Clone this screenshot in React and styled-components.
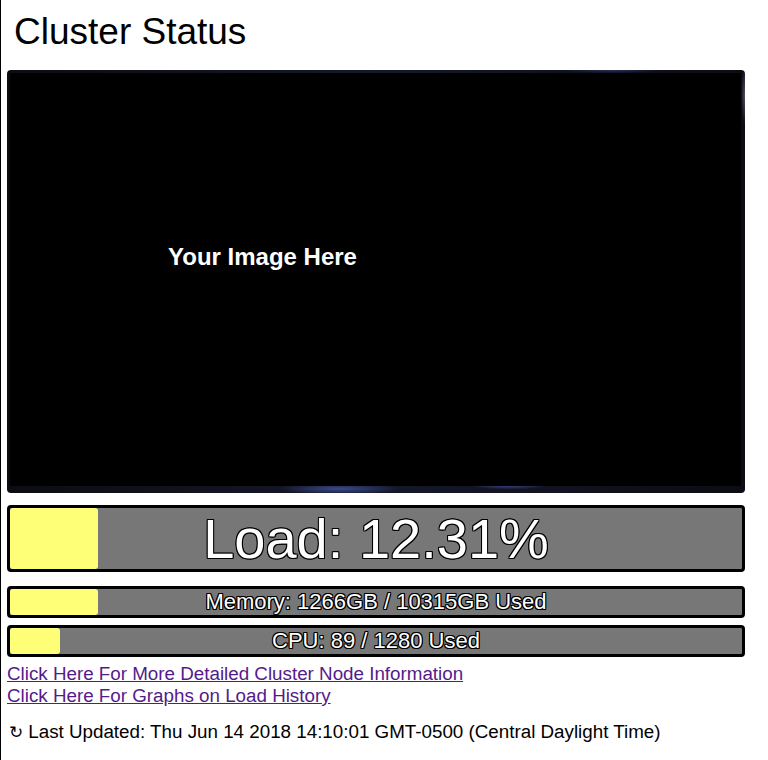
import React from 'react'
import styled, { createGlobalStyle } from 'styled-components'

const GlobalStyle = createGlobalStyle`
  html, body {
    margin: 0;
    padding: 0;
    background: #fff;
  }
  body {
    font-family: "Liberation Sans", Arial, sans-serif;
  }
`

const Page = styled.div`
  min-height: 100vh;
  box-sizing: border-box;
  border-left: 1px solid #000;
  padding: 8px 23px 0 6px;
`

const Title = styled.h1`
  margin: 2px 0 17px 7px;
  font-size: 37px;
  font-weight: normal;
  line-height: 43px;
  color: #000;
`

const ImageFrame = styled.div`
  height: 423px;
  box-sizing: border-box;
  border-radius: 4px;
  padding: 3px 4px 7px 3px;
  background:
    radial-gradient(ellipse 60px 6px at 45% 99%, #3a4a8a, transparent),
    radial-gradient(ellipse 40px 5px at 68% 98%, #4a4c9a, transparent),
    radial-gradient(ellipse 50px 3px at 82% 0%, #2a3060, transparent),
    radial-gradient(ellipse 4px 30px at 100% 6%, #50506a, transparent),
    linear-gradient(90deg, #0c0c12, #15182a 50%, #0c0c14);
`

const ImageInner = styled.div`
  height: 100%;
  background: #000;
  padding: 170px 0 0 158px;
  box-sizing: border-box;
`

const Caption = styled.span`
  color: #fff;
  font-weight: bold;
  font-size: 24px;
`

const Bar = styled.div`
  position: relative;
  margin-top: ${p => p.$gap}px;
  height: ${p => p.$height}px;
  border: 3px solid #000;
  border-radius: 4px;
  background: #777;
  display: flex;
  align-items: center;
  justify-content: center;
  overflow: hidden;
`

const Fill = styled.div`
  position: absolute;
  left: 0;
  top: 0;
  bottom: 0;
  background: #ffff77;
  border-radius: 3px;
`

const BarLabel = styled.span`
  position: relative;
  color: #fff;
  font-size: ${p => p.$size}px;
  line-height: 1;
  white-space: nowrap;
  text-shadow:
    -1px -1px 0 #000, 1px -1px 0 #000, -1px 1px 0 #000, 1px 1px 0 #000,
    0 -1px 0 #000, 0 1px 0 #000, -1px 0 0 #000, 1px 0 0 #000;
`

const Links = styled.div`
  margin-top: 6px;
  display: flex;
  flex-direction: column;
  align-items: flex-start;
`

const Link = styled.a`
  font-size: 18.8px;
  color: #551a8b;
  text-decoration: underline;
  line-height: 22px;
`

const Updated = styled.p`
  margin: 14px 0 0 2px;
  font-size: 18.8px;
  color: #000;
`

const Glyph = styled.span`
  font-family: "DejaVu Sans", sans-serif;
  font-size: 17px;
  margin-right: 5px;
`

const StatBar = ({ label, value, size, height, gap }) => (
  <Bar $height={height} $gap={gap}>
    <Fill style={{ width: `${value * 98}%` }} />
    <BarLabel $size={size}>{label}</BarLabel>
  </Bar>
)

export default function App() {
  return (
    <>
      <GlobalStyle />
      <Page>
        <Title>Cluster Status</Title>
        <ImageFrame>
          <ImageInner>
            <Caption>Your Image Here</Caption>
          </ImageInner>
        </ImageFrame>
        <StatBar label="Load: 12.31%" value={0.1231} size={56} height={61} gap={12} />
        <StatBar label="Memory: 1266GB / 10315GB Used" value={1266 / 10315} size={22} height={26} gap={14} />
        <StatBar label="CPU: 89 / 1280 Used" value={89 / 1280} size={22} height={26} gap={7} />
        <Links>
          <Link href="#nodes">Click Here For More Detailed Cluster Node Information</Link>
          <Link href="#history">Click Here For Graphs on Load History</Link>
        </Links>
        <Updated>
          <Glyph>↻</Glyph>Last Updated: Thu Jun 14 2018 14:10:01 GMT-0500 (Central Daylight Time)
        </Updated>
      </Page>
    </>
  )
}
